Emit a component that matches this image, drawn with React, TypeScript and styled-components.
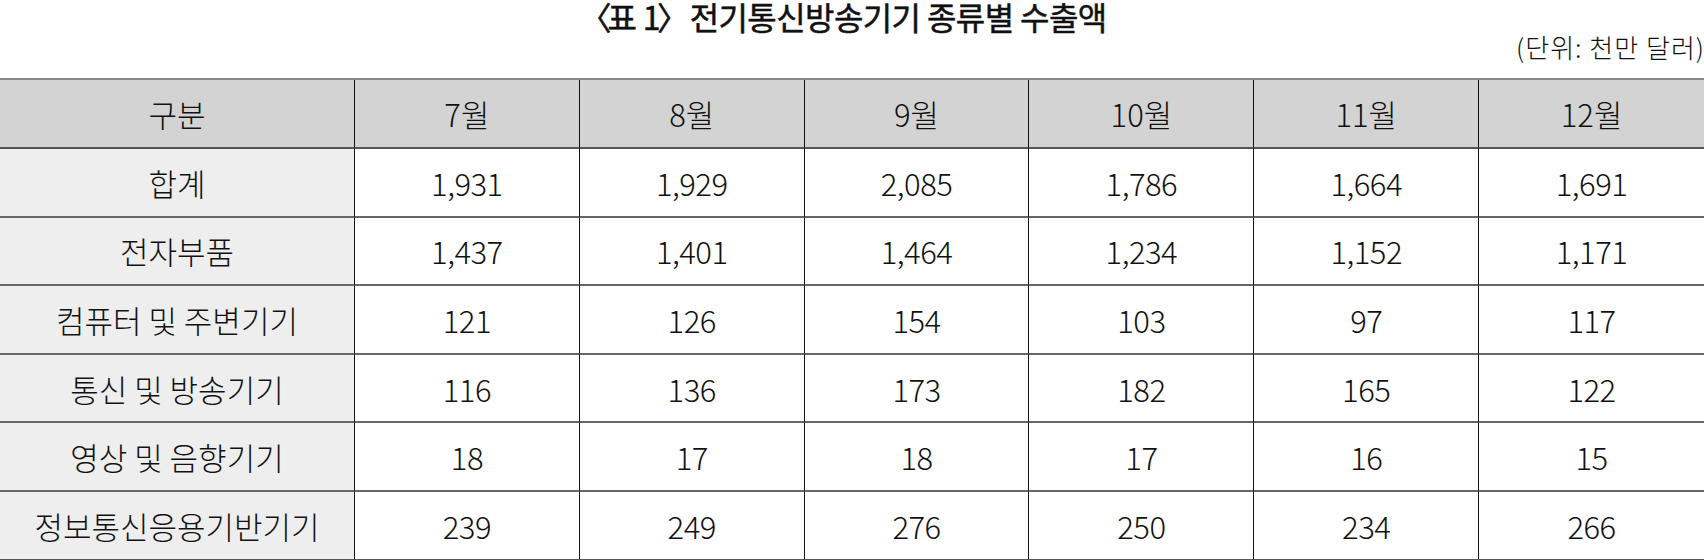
import React from "react";
import styled, { createGlobalStyle } from "styled-components";

const Global = createGlobalStyle`
  html, body { margin: 0; padding: 0; background: #ffffff; }
  body { font-family: "Noto Sans CJK KR", "Noto Sans", sans-serif; color: #111; }
`;

const Page = styled.div`
  width: 1704px;
  display: flex;
  flex-direction: column;
`;

const Title = styled.h1`
  margin: 0;
  height: 34px;
  padding-right: 18px;
  font-size: 32px;
  line-height: 32px;
  font-weight: 400;
  -webkit-text-stroke: 0.5px #111;
  text-align: center;
  letter-spacing: -0.6px;
`;

const Tight = styled.span<{ $gap: number }>`
  letter-spacing: ${(p) => p.$gap}px;
`;

const Unit = styled.div`
  height: 44px;
  font-size: 26px;
  line-height: 26px;
  font-weight: 300;
  text-align: right;
  letter-spacing: 1px;
  margin-right: -1px;
`;

const Table = styled.div`
  display: grid;
  grid-template-columns: 355px repeat(6, 1fr);
  border-top: 2px solid #8a8a8a;
  border-bottom: 2px solid #555;
`;

const Cell = styled.div<{ $head?: boolean; $label?: boolean; $last?: boolean; $row: number }>`
  height: ${(p) => (p.$head ? 67 : 66.6)}px;
  display: flex;
  align-items: center;
  justify-content: center;
  font-size: 31px;
  font-weight: 300;
  letter-spacing: ${(p) => (p.$head || p.$label ? "0" : "-0.5px")};
  background: ${(p) => (p.$head ? "#d3d3d3" : p.$label ? "#eeeeee" : "#ffffff")};
  border-right: ${(p) => (p.$last ? "none" : "1px solid #111")};
  border-bottom: ${(p) => (p.$row === 6 ? "none" : p.$head ? "2px solid #555" : "2px solid #666")};
`;

const months = ["7월", "8월", "9월", "10월", "11월", "12월"];

const rows: { label: string; values: string[] }[] = [
  { label: "합계", values: ["1,931", "1,929", "2,085", "1,786", "1,664", "1,691"] },
  { label: "전자부품", values: ["1,437", "1,401", "1,464", "1,234", "1,152", "1,171"] },
  { label: "컴퓨터 및 주변기기", values: ["121", "126", "154", "103", "97", "117"] },
  { label: "통신 및 방송기기", values: ["116", "136", "173", "182", "165", "122"] },
  { label: "영상 및 음향기기", values: ["18", "17", "18", "17", "16", "15"] },
  { label: "정보통신응용기반기기", values: ["239", "249", "276", "250", "234", "266"] },
];

export default function App() {
  return (
    <Page>
      <Global />
      <Title>
        <Tight $gap={-4}>〈</Tight>표 <Tight $gap={-3.5}>1</Tight>
        <Tight $gap={-6}>〉</Tight> 전기통신방송기기 종류별 수출액
      </Title>
      <Unit>(단위: 천만 달러)</Unit>
      <Table>
        <Cell $head $label $row={-1}>구분</Cell>
        {months.map((m, i) => (
          <Cell key={m} $head $row={-1} $last={i === months.length - 1}>
            {m}
          </Cell>
        ))}
        {rows.map((r, ri) => (
          <React.Fragment key={r.label}>
            <Cell $label $row={ri + 1}>{r.label}</Cell>
            {r.values.map((v, vi) => (
              <Cell key={vi} $row={ri + 1} $last={vi === r.values.length - 1}>
                {v}
              </Cell>
            ))}
          </React.Fragment>
        ))}
      </Table>
    </Page>
  );
}
